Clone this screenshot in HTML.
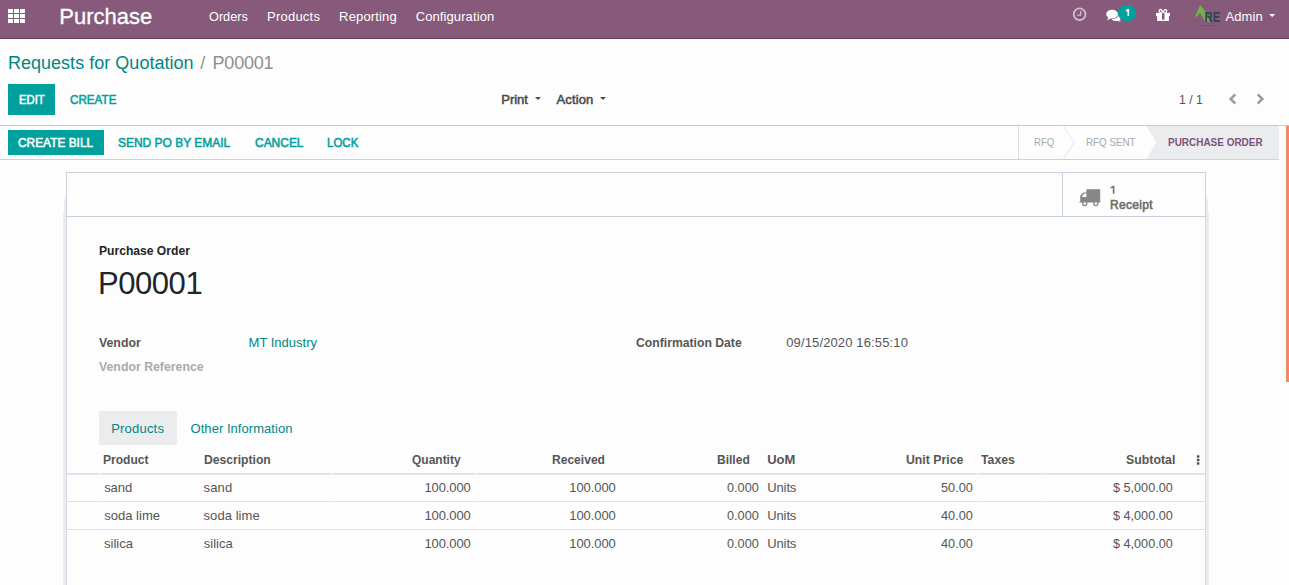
<!DOCTYPE html>
<html>
<head>
<meta charset="utf-8">
<title>Purchase</title>
<style>
*{box-sizing:border-box;margin:0;padding:0}
html,body{width:1289px;height:585px;overflow:hidden;background:#fdfdfd;font-family:"Liberation Sans",sans-serif;font-size:13px;color:#4c4c4c}
.t{position:absolute;white-space:pre;line-height:1;z-index:5}
.a{position:absolute}
</style>
</head>
<body>
<!-- navbar -->
<div class="a" style="left:0;top:0;width:1289px;height:38px;background:#875a7b"></div>
<div class="a" style="left:0;top:38px;width:1289px;height:1px;background:#65425b"></div>
<svg class="a" style="left:8px;top:9px" width="18" height="14" viewBox="0 0 18 14"><g fill="#fff"><rect x="0" y="0" width="5" height="4"/><rect x="6" y="0" width="5" height="4"/><rect x="12" y="0" width="5" height="4"/><rect x="0" y="5" width="5" height="4"/><rect x="6" y="5" width="5" height="4"/><rect x="12" y="5" width="5" height="4"/><rect x="0" y="10" width="5" height="4"/><rect x="6" y="10" width="5" height="4"/><rect x="12" y="10" width="5" height="4"/></g></svg>
<!-- clock -->
<svg class="a" style="left:1071px;top:6px" width="17" height="17" viewBox="0 0 17 17"><circle cx="8.600" cy="8.300" r="5.850" fill="none" stroke="#d3bdcc" stroke-width="1.800"/><path d="M9.700 5v4.200h-3.500" fill="none" stroke="#d3bdcc" stroke-width="1.300"/></svg>
<!-- chat -->
<svg class="a" style="left:1105px;top:8px" width="18" height="15" viewBox="0 0 18 15"><g fill="#fff"><ellipse cx="11.200" cy="9.800" rx="4.700" ry="3.300"/><path d="M13 11.500L16 14 12 12.800z"/></g><ellipse cx="7.100" cy="6.100" rx="6.700" ry="5" fill="#875a7b"/><g fill="#fff"><ellipse cx="7.100" cy="6.100" rx="5.900" ry="4.300"/><path d="M3.500 8.500L2.200 12.200 6.500 10z"/></g></svg>
<div class="a" style="left:1118px;top:4.600px;width:18.300px;height:16.300px;border-radius:8.200px;background:#00a09d"></div>
<svg class="a" style="left:1124px;top:8px" width="8" height="10" viewBox="0 0 8 10"><path d="M3.500 1.100L5.100 1.100 5.100 8 3.500 8 3.500 2.900 1.900 3.800 1.600 2.700z" fill="#fff"/></svg>
<!-- gift -->
<svg class="a" style="left:1155px;top:8px" width="16" height="14" viewBox="0 0 16 14"><g fill="none" stroke="#fff" stroke-width="1.300"><ellipse cx="5.800" cy="3.300" rx="1.400" ry="1.800" transform="rotate(-35 5.800 3.300)"/><ellipse cx="10.200" cy="3.300" rx="1.400" ry="1.800" transform="rotate(35 10.200 3.300)"/></g><g fill="#fff"><rect x="1" y="4.900" width="14" height="3.200"/><rect x="2.100" y="8" width="11.800" height="5"/></g><rect x="7" y="5.200" width="2.500" height="6.500" fill="#875a7b"/></svg>
<!-- logo -->
<svg class="a" style="left:1195px;top:4px" width="27" height="24" viewBox="0 0 27 24"><path d="M5.300 0.900L0.800 10.800 0.900 13.700 5.100 8.700 10.200 18 15 18.300 10.300 7.600z" fill="#6fb344"/><text x="9.600" y="18.200" font-family="Liberation Sans" font-weight="bold" font-size="14.300" fill="#2e4553" textLength="15.600" lengthAdjust="spacingAndGlyphs">RE</text><path d="M6 21.600h17" stroke="#4e3d55" stroke-width="1" stroke-dasharray="2 1.500 1 1 3 2" opacity=".55"/><path d="M12.200 12.500l1.500 1.800-1.200 3.500z" fill="#6fb344"/></svg>
<!-- admin caret -->
<svg class="a" style="left:1269px;top:14px" width="7" height="4" viewBox="0 0 7 4"><path d="M0.200 0h6L3.200 3z" fill="#fff"/></svg>

<!-- control panel -->
<div class="a" style="left:0;top:125px;width:1289px;height:1px;background:#c9c9c9"></div>
<div class="a" style="left:8px;top:84px;width:47px;height:31px;background:#00a09d"></div>
<svg class="a" style="left:535px;top:97px" width="6" height="3" viewBox="0 0 6 3"><path d="M0 0h6L3 3z" fill="#4c4c4c"/></svg>
<svg class="a" style="left:600px;top:97px" width="6" height="3" viewBox="0 0 6 3"><path d="M0 0h6L3 3z" fill="#4c4c4c"/></svg>
<svg class="a" style="left:1228px;top:92px" width="10" height="13" viewBox="0 0 10 13"><path d="M7.300 2.300L2.600 7 7.300 11.700" fill="none" stroke="#9a9aa1" stroke-width="2.500"/></svg>
<svg class="a" style="left:1255px;top:92px" width="10" height="13" viewBox="0 0 10 13"><path d="M2.700 2.300L7.400 7 2.700 11.700" fill="none" stroke="#9a9aa1" stroke-width="2.500"/></svg>

<!-- status bar -->
<div class="a" style="left:0;top:159px;width:1279px;height:1px;background:#cfd3d8"></div>
<div class="a" style="left:8px;top:130px;width:96px;height:25px;background:#00a09d"></div>
<div class="a" style="left:1018px;top:126px;width:1px;height:33px;background:#dcdfe3"></div>
<svg class="a" style="left:1019px;top:126px" width="260" height="33" viewBox="0 0 260 33">
  <path d="M127.300 0H260V33H127.300L137.300 16.500z" fill="#ebecee"/>
  <path d="M44.500 0L55 16.500 44.500 33" fill="none" stroke="#e4e7ea" stroke-width="1"/>
</svg>
<!-- orange scrollbar -->
<div class="a" style="left:1286px;top:126px;width:3px;height:256px;background:#f08c64"></div>

<!-- sheet -->
<div class="a" style="left:66px;top:172px;width:1140px;height:440px;background:#fdfdfd;border:1px solid #cbd3dc"></div>
<div class="a" style="left:65px;top:195px;width:1px;height:400px;background:#e9ebee"></div><div class="a" style="left:64px;top:200px;width:1px;height:400px;background:#e9ebee"></div><div class="a" style="left:63px;top:213px;width:1px;height:400px;background:#ebedf0"></div>
<div class="a" style="left:1206px;top:195px;width:1px;height:400px;background:#e9ebee"></div><div class="a" style="left:1207px;top:200px;width:1px;height:400px;background:#e9ebee"></div><div class="a" style="left:1208px;top:213px;width:1px;height:400px;background:#ebedf0"></div>
<div class="a" style="left:67px;top:216px;width:1138px;height:1px;background:#c9d2dc"></div>
<div class="a" style="left:1062px;top:173px;width:1px;height:43px;background:#c9d2dc"></div>
<div class="a" style="left:66px;top:217px;width:1px;height:380px;background:#d5dbe2"></div><div class="a" style="left:1205px;top:217px;width:1px;height:380px;background:#d5dbe2"></div>
<!-- truck -->
<svg class="a" style="left:1079px;top:188px" width="23" height="19" viewBox="0 0 23 19"><g fill="#888686"><path fill-rule="evenodd" d="M7.400 1.300H21.200V14.500H0.400V13.500H1.200V7.800L4.300 4.400H7.400zM2.700 8.900H7.400V5.600H5.100z"/><circle cx="5.700" cy="15.500" r="2.700"/><circle cx="16.800" cy="15.500" r="2.700"/></g><circle cx="5.700" cy="15.600" r="1.350" fill="#fdfdfd"/><circle cx="16.800" cy="15.600" r="1.350" fill="#fdfdfd"/></svg>
<svg class="a" style="left:1109px;top:185px" width="8" height="10" viewBox="0 0 8 10"><path d="M3.800 0.700L5.400 0.700 5.400 8.700 3.800 8.700 3.800 2.700 1.700 3.600 1.400 2.500z" fill="#75688f"/></svg>

<!-- tabs -->
<div class="a" style="left:99px;top:411px;width:78px;height:34px;background:#ebecee"></div>
<!-- table lines -->
<div class="a" style="left:67px;top:473px;width:1138px;height:1px;background:#dce0e6"></div>
<div class="a" style="left:67px;top:474px;width:1138px;height:1px;background:#e6e9ed"></div>
<div class="a" style="left:67px;top:501px;width:1138px;height:1px;background:#dee2e6"></div>
<div class="a" style="left:67px;top:529px;width:1138px;height:1px;background:#dee2e6"></div>
<div class="a" style="left:99px;top:473px;width:1px;height:57px;background:#fdfdfd;opacity:.8"></div><div class="a" style="left:331px;top:473px;width:1px;height:57px;background:#fdfdfd;opacity:.8"></div><div class="a" style="left:475px;top:473px;width:1px;height:57px;background:#fdfdfd;opacity:.8"></div><div class="a" style="left:977px;top:473px;width:1px;height:57px;background:#fdfdfd;opacity:.8"></div><div class="a" style="left:1042px;top:473px;width:1px;height:57px;background:#fdfdfd;opacity:.8"></div>
<!-- kebab -->
<svg class="a" style="left:1196px;top:455px" width="5" height="10" viewBox="0 0 5 10"><g fill="#4c4c4c"><rect x="0.900" y="0.200" width="2.500" height="2.500" rx=".6"/><rect x="0.900" y="3.700" width="2.500" height="2.500" rx=".6"/><rect x="0.900" y="7.200" width="2.500" height="2.500" rx=".6"/></g></svg>

<span class="t" style="left:59.30px;top:6px;font-size:22px;font-weight:normal;-webkit-text-stroke:0.3px #ffffff;color:#ffffff;">Purchase</span>
<span class="t" style="left:208.65px;top:10px;font-size:13px;color:#ffffff;transform:scaleX(0.9775);transform-origin:0 0;">Orders</span>
<span class="t" style="left:267.00px;top:10px;font-size:13px;color:#ffffff;letter-spacing:0.229px;">Products</span>
<span class="t" style="left:339.10px;top:10px;font-size:13px;color:#ffffff;letter-spacing:0.150px;">Reporting</span>
<span class="t" style="left:415.70px;top:10px;font-size:13px;color:#ffffff;letter-spacing:0.100px;">Configuration</span>
<span class="t" style="left:1225.40px;top:10px;font-size:13px;color:#ffffff;letter-spacing:0.125px;">Admin</span>
<span class="t" style="left:7.90px;top:54px;font-size:18px;color:#008784;letter-spacing:0.029px;">Requests for Quotation</span>
<span class="t" style="left:200.20px;top:54px;font-size:18px;color:#8f8f8f;">/</span>
<span class="t" style="left:212.60px;top:54px;font-size:18px;color:#8f8f8f;letter-spacing:-0.240px;">P00001</span>
<span class="t" style="left:19.00px;top:93px;font-size:13px;font-weight:normal;-webkit-text-stroke:0.55px #ffffff;color:#ffffff;transform:scaleX(0.8681);transform-origin:0 0;">EDIT</span>
<span class="t" style="left:70.00px;top:93px;font-size:13px;font-weight:normal;-webkit-text-stroke:0.55px #00a09d;color:#00a09d;transform:scaleX(0.8971);transform-origin:0 0;">CREATE</span>
<span class="t" style="left:501.30px;top:93px;font-size:13px;font-weight:normal;-webkit-text-stroke:0.55px #4c4c4c;color:#4c4c4c;letter-spacing:-0.050px;">Print</span>
<span class="t" style="left:556.50px;top:93px;font-size:13px;font-weight:normal;-webkit-text-stroke:0.55px #4c4c4c;color:#4c4c4c;letter-spacing:0.140px;">Action</span>
<span class="t" style="left:1178.70px;top:93px;font-size:13px;color:#555555;transform:scaleX(0.9349);transform-origin:0 0;">1 / 1</span>
<span class="t" style="left:18.00px;top:136px;font-size:13px;font-weight:normal;-webkit-text-stroke:0.55px #ffffff;color:#ffffff;transform:scaleX(0.9152);transform-origin:0 0;">CREATE BILL</span>
<span class="t" style="left:117.75px;top:136px;font-size:13px;font-weight:normal;-webkit-text-stroke:0.55px #00a09d;color:#00a09d;transform:scaleX(0.9209);transform-origin:0 0;">SEND PO BY EMAIL</span>
<span class="t" style="left:254.60px;top:136px;font-size:13px;font-weight:normal;-webkit-text-stroke:0.55px #00a09d;color:#00a09d;transform:scaleX(0.9201);transform-origin:0 0;">CANCEL</span>
<span class="t" style="left:326.90px;top:136px;font-size:13px;font-weight:normal;-webkit-text-stroke:0.55px #00a09d;color:#00a09d;transform:scaleX(0.8848);transform-origin:0 0;">LOCK</span>
<span class="t" style="left:1033.95px;top:137px;font-size:11px;color:#a8a8a8;transform:scaleX(0.8717);transform-origin:0 0;">RFQ</span>
<span class="t" style="left:1086.15px;top:137px;font-size:11px;color:#a8a8a8;transform:scaleX(0.8902);transform-origin:0 0;">RFQ SENT</span>
<span class="t" style="left:1168.45px;top:137px;font-size:11px;font-weight:bold;color:#7c537a;transform:scaleX(0.9053);transform-origin:0 0;">PURCHASE ORDER</span>
<span class="t" style="left:1109.95px;top:199px;font-size:12px;font-weight:normal;-webkit-text-stroke:0.55px #6b6b6b;color:#6b6b6b;letter-spacing:0.317px;">Receipt</span>
<span class="t" style="left:98.90px;top:244px;font-size:13px;font-weight:bold;color:#212529;transform:scaleX(0.9313);transform-origin:0 0;">Purchase Order</span>
<span class="t" style="left:97.90px;top:268px;font-size:31px;color:#212529;letter-spacing:-0.420px;">P00001</span>
<span class="t" style="left:98.90px;top:336px;font-size:13px;font-weight:bold;color:#565656;transform:scaleX(0.9461);transform-origin:0 0;">Vendor</span>
<span class="t" style="left:248.60px;top:336px;font-size:13px;color:#008784;">MT Industry</span>
<span class="t" style="left:98.65px;top:360px;font-size:13px;font-weight:bold;color:#aaaaaa;transform:scaleX(0.9466);transform-origin:0 0;">Vendor Reference</span>
<span class="t" style="left:636.10px;top:336px;font-size:13px;font-weight:bold;color:#565656;transform:scaleX(0.9378);transform-origin:0 0;">Confirmation Date</span>
<span class="t" style="left:786.20px;top:336px;font-size:13px;color:#555555;letter-spacing:0.133px;">09/15/2020 16:55:10</span>
<span class="t" style="left:111.20px;top:422px;font-size:13px;color:#008784;letter-spacing:0.200px;">Products</span>
<span class="t" style="left:190.55px;top:422px;font-size:13px;color:#008784;letter-spacing:0.044px;">Other Information</span>
<span class="t" style="left:103.10px;top:453px;font-size:13px;font-weight:bold;color:#565656;transform:scaleX(0.9275);transform-origin:0 0;">Product</span>
<span class="t" style="left:203.85px;top:453px;font-size:13px;font-weight:bold;color:#565656;transform:scaleX(0.9335);transform-origin:0 0;">Description</span>
<span class="t" style="left:412.15px;top:453px;font-size:13px;font-weight:bold;color:#565656;transform:scaleX(0.9220);transform-origin:0 0;">Quantity</span>
<span class="t" style="left:552.35px;top:453px;font-size:13px;font-weight:bold;color:#565656;transform:scaleX(0.9276);transform-origin:0 0;">Received</span>
<span class="t" style="left:717.10px;top:453px;font-size:13px;font-weight:bold;color:#565656;transform:scaleX(0.9247);transform-origin:0 0;">Billed</span>
<span class="t" style="left:767.30px;top:453px;font-size:13px;font-weight:bold;color:#565656;letter-spacing:-0.100px;">UoM</span>
<span class="t" style="left:906.30px;top:453px;font-size:13px;font-weight:bold;color:#565656;transform:scaleX(0.9438);transform-origin:0 0;">Unit Price</span>
<span class="t" style="left:981.00px;top:453px;font-size:13px;font-weight:bold;color:#565656;transform:scaleX(0.9437);transform-origin:0 0;">Taxes</span>
<span class="t" style="left:1126.00px;top:453px;font-size:13px;font-weight:bold;color:#565656;transform:scaleX(0.9497);transform-origin:0 0;">Subtotal</span>
<span class="t" style="left:104.15px;top:481px;font-size:13px;color:#555555;letter-spacing:-0.033px;">sand</span>
<span class="t" style="left:203.55px;top:481px;font-size:13px;color:#555555;letter-spacing:0.167px;">sand</span>
<span class="t" style="left:424.45px;top:481px;font-size:13px;color:#555555;letter-spacing:-0.117px;">100.000</span>
<span class="t" style="left:569.30px;top:481px;font-size:13px;color:#555555;letter-spacing:-0.083px;">100.000</span>
<span class="t" style="left:727.45px;top:481px;font-size:13px;color:#555555;transform:scaleX(0.9759);transform-origin:0 0;">0.000</span>
<span class="t" style="left:767.25px;top:481px;font-size:13px;color:#555555;letter-spacing:-0.125px;">Units</span>
<span class="t" style="left:940.90px;top:481px;font-size:13px;color:#555555;transform:scaleX(0.9785);transform-origin:0 0;">50.00</span>
<span class="t" style="left:1112.90px;top:481px;font-size:13px;color:#555555;transform:scaleX(0.9724);transform-origin:0 0;">$ 5,000.00</span>
<span class="t" style="left:104.20px;top:509px;font-size:13px;color:#555555;letter-spacing:0.025px;">soda lime</span>
<span class="t" style="left:203.55px;top:509px;font-size:13px;color:#555555;letter-spacing:0.062px;">soda lime</span>
<span class="t" style="left:424.45px;top:509px;font-size:13px;color:#555555;letter-spacing:-0.117px;">100.000</span>
<span class="t" style="left:569.30px;top:509px;font-size:13px;color:#555555;letter-spacing:-0.083px;">100.000</span>
<span class="t" style="left:727.45px;top:509px;font-size:13px;color:#555555;transform:scaleX(0.9759);transform-origin:0 0;">0.000</span>
<span class="t" style="left:767.25px;top:509px;font-size:13px;color:#555555;letter-spacing:-0.125px;">Units</span>
<span class="t" style="left:940.90px;top:509px;font-size:13px;color:#555555;transform:scaleX(0.9785);transform-origin:0 0;">40.00</span>
<span class="t" style="left:1112.90px;top:509px;font-size:13px;color:#555555;transform:scaleX(0.9724);transform-origin:0 0;">$ 4,000.00</span>
<span class="t" style="left:104.00px;top:537px;font-size:13px;color:#555555;">silica</span>
<span class="t" style="left:203.80px;top:537px;font-size:13px;color:#555555;">silica</span>
<span class="t" style="left:424.45px;top:537px;font-size:13px;color:#555555;letter-spacing:-0.117px;">100.000</span>
<span class="t" style="left:569.30px;top:537px;font-size:13px;color:#555555;letter-spacing:-0.083px;">100.000</span>
<span class="t" style="left:727.45px;top:537px;font-size:13px;color:#555555;transform:scaleX(0.9759);transform-origin:0 0;">0.000</span>
<span class="t" style="left:767.25px;top:537px;font-size:13px;color:#555555;letter-spacing:-0.125px;">Units</span>
<span class="t" style="left:940.90px;top:537px;font-size:13px;color:#555555;transform:scaleX(0.9785);transform-origin:0 0;">40.00</span>
<span class="t" style="left:1112.90px;top:537px;font-size:13px;color:#555555;transform:scaleX(0.9724);transform-origin:0 0;">$ 4,000.00</span>
</body>
</html>
